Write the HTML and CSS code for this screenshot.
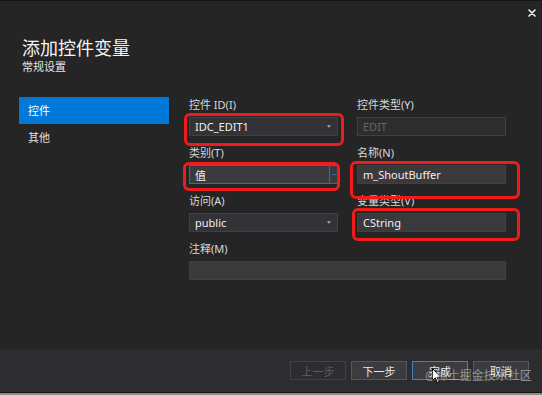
FILE: index.html
```html
<!DOCTYPE html>
<html lang="zh-CN">
<head>
    <meta charset="UTF-8">
    <meta name="viewport" content="width=device-width, initial-scale=1.0">
    <title>添加控件变量</title>
    <link rel="stylesheet" href="styles.css">
</head>
<body>

<div class="dialog">
    <div class="titlebar">
        <button class="close-btn" aria-label="关闭">
            <svg width="8" height="8" viewBox="0 0 8 8">
                <path d="M1 1 L7 7 M7 1 L1 7" stroke="#f0f0f0" stroke-width="1.6" stroke-linecap="round"/>
            </svg>
        </button>
    </div>

    <div class="heading">
        <h1>添加控件变量</h1>
        <p>常规设置</p>
    </div>

    <div class="content">
        <ul class="nav">
            <li class="nav-item active">控件</li>
            <li class="nav-item">其他</li>
        </ul>

        <div class="form">
            <div class="field">
                <label>控件 ID(I)</label>
                <div class="combo"><span>IDC_EDIT1</span><i class="arrow"></i></div>
            </div>
            <div class="field">
                <label>控件类型(Y)</label>
                <div class="input disabled">EDIT</div>
            </div>
            <div class="field">
                <label>类别(T)</label>
                <div class="combo focused"><span>值</span><i class="arrow"></i></div>
            </div>
            <div class="field">
                <label>名称(N)</label>
                <div class="input">m_ShoutBuffer</div>
            </div>
            <div class="field">
                <label>访问(A)</label>
                <div class="combo"><span>public</span><i class="arrow"></i></div>
            </div>
            <div class="field">
                <label>变量类型(V)</label>
                <div class="input">CString</div>
            </div>
            <div class="field wide">
                <label>注释(M)</label>
                <div class="input"></div>
            </div>
        </div>
    </div>

    <div class="footer">
        <button class="btn" disabled>上一步</button>
        <button class="btn">下一步</button>
        <button class="btn default">完成</button>
        <button class="btn">取消</button>
    </div>
    <div class="bottom-strip"></div>

    <!-- red annotation boxes drawn over the screenshot -->
    <span class="mark mark-id"></span>
    <span class="mark mark-kind"></span>
    <span class="mark mark-name"></span>
    <span class="mark mark-type"></span>

    <svg class="cursor" width="10" height="16" viewBox="0 0 10 16">
        <path d="M0.5 0.5 L0.5 12.5 L3.3 9.9 L5.4 14.8 L7.1 14 L5 9.3 L8.8 9.3 Z" fill="#fff" stroke="#000" stroke-width="1"/>
    </svg>
    <div class="watermark">@稀土掘金技术社区</div>
</div>

</body>
</html>
```

FILE: styles.css
```css
* {
    box-sizing: border-box;
}

body {
    margin: 0;
    padding: 0;
    background-color: #252526;
    font-family: "Noto Sans", "Noto Sans CJK SC", sans-serif;
    color: #dcdcdc;
}

.dialog {
    position: relative;
    width: 542px;
    height: 395px;
    display: flex;
    flex-direction: column;
    background-color: #252526;
    border-top: 1px solid #161616;
    overflow: hidden;
}

.titlebar {
    height: 23px;
    display: flex;
    justify-content: flex-end;
    align-items: flex-start;
    padding: 8px 6px 0 0;
}

.close-btn {
    width: 8px;
    height: 8px;
    padding: 0;
    border: none;
    background: none;
    display: flex;
    cursor: pointer;
}

.heading {
    padding: 12px 0 0 22px;
}

.heading h1 {
    margin: 0;
    font-size: 18px;
    line-height: 24px;
    font-weight: normal;
    color: #f4f4f4;
}

.heading p {
    margin: 0;
    font-size: 11px;
    line-height: 14px;
    color: #e6e6e6;
}

.content {
    flex: 1;
    display: flex;
    margin-top: 23px;
    padding-left: 19px;
}

.nav {
    list-style: none;
    margin: 0;
    padding: 0;
    width: 150px;
}

.nav-item {
    height: 27px;
    line-height: 27px;
    padding-left: 9px;
    font-size: 11px;
    color: #e0e0e0;
}

.nav-item.active {
    background-color: #0078d7;
    color: #ffffff;
}

.form {
    margin-left: 20px;
    padding-top: 1px;
    display: grid;
    grid-template-columns: 149px 149px;
    grid-auto-rows: 38px;
    column-gap: 19px;
    row-gap: 10px;
    align-content: start;
}

.field.wide {
    grid-column: 1 / 3;
}

.field label {
    display: block;
    height: 14px;
    line-height: 14px;
    margin-bottom: 5px;
    font-size: 11px;
    color: #d8d8d8;
}

.combo,
.input {
    height: 19px;
    display: flex;
    align-items: center;
    padding: 0 5px;
    font-size: 11px;
    color: #f0f0f0;
    background-color: #333337;
    border: 1px solid #3f3f46;
}

.combo span {
    flex: 1;
}

.combo .arrow {
    width: 0;
    height: 0;
    border-left: 2.5px solid transparent;
    border-right: 2.5px solid transparent;
    border-top: 3px solid #9a9a9a;
    margin-right: 1px;
}

.combo.focused {
    background-color: #3a3a40;
    border-color: #2f6fa8;
    padding-right: 0;
}

.combo.focused .arrow {
    width: 8px;
    height: 17px;
    border: none;
    border-left: 1px solid #2f6fa8;
    background: linear-gradient(#2f6fa8, #2f6fa8) center / 4px 1px no-repeat;
    margin-right: 0;
}

.input {
    background-color: #3a3a3c;
}

.input.disabled {
    background-color: #2d2d30;
    color: #666668;
}

.footer {
    height: 44px;
    display: flex;
    justify-content: flex-end;
    gap: 5px;
    padding: 12px 13px 0 0;
    background-color: #2d2d30;
    border-bottom: 1px solid #141414;
}

.btn {
    width: 56px;
    height: 19px;
    padding: 0;
    font-family: "Noto Sans", "Noto Sans CJK SC", sans-serif;
    font-size: 11px;
    color: #e8e8e8;
    background-color: #3c3c40;
    border: 1px solid #55555a;
}

.btn:disabled {
    color: #5c5c5e;
    background-color: #2d2d30;
    border-color: #434346;
}

.btn.default {
    border-color: #3c82c4;
}

.bottom-strip {
    height: 2px;
    background-color: #8c8c8c;
}

.mark {
    position: absolute;
    border: 3px solid #f01c1c;
    border-radius: 6px;
}

.mark-id {
    left: 184px;
    top: 112px;
    width: 160px;
    height: 33px;
}

.mark-kind {
    left: 183px;
    top: 161px;
    width: 157px;
    height: 29px;
}

.mark-name {
    left: 350px;
    top: 160px;
    width: 170px;
    height: 38px;
}

.mark-type {
    left: 352px;
    top: 207px;
    width: 168px;
    height: 33px;
}

.cursor {
    position: absolute;
    left: 432px;
    top: 367px;
}

.watermark {
    position: absolute;
    left: 425px;
    top: 367px;
    font-size: 12px;
    line-height: 16px;
    color: rgba(220, 220, 220, 0.55);
    white-space: nowrap;
}
```
